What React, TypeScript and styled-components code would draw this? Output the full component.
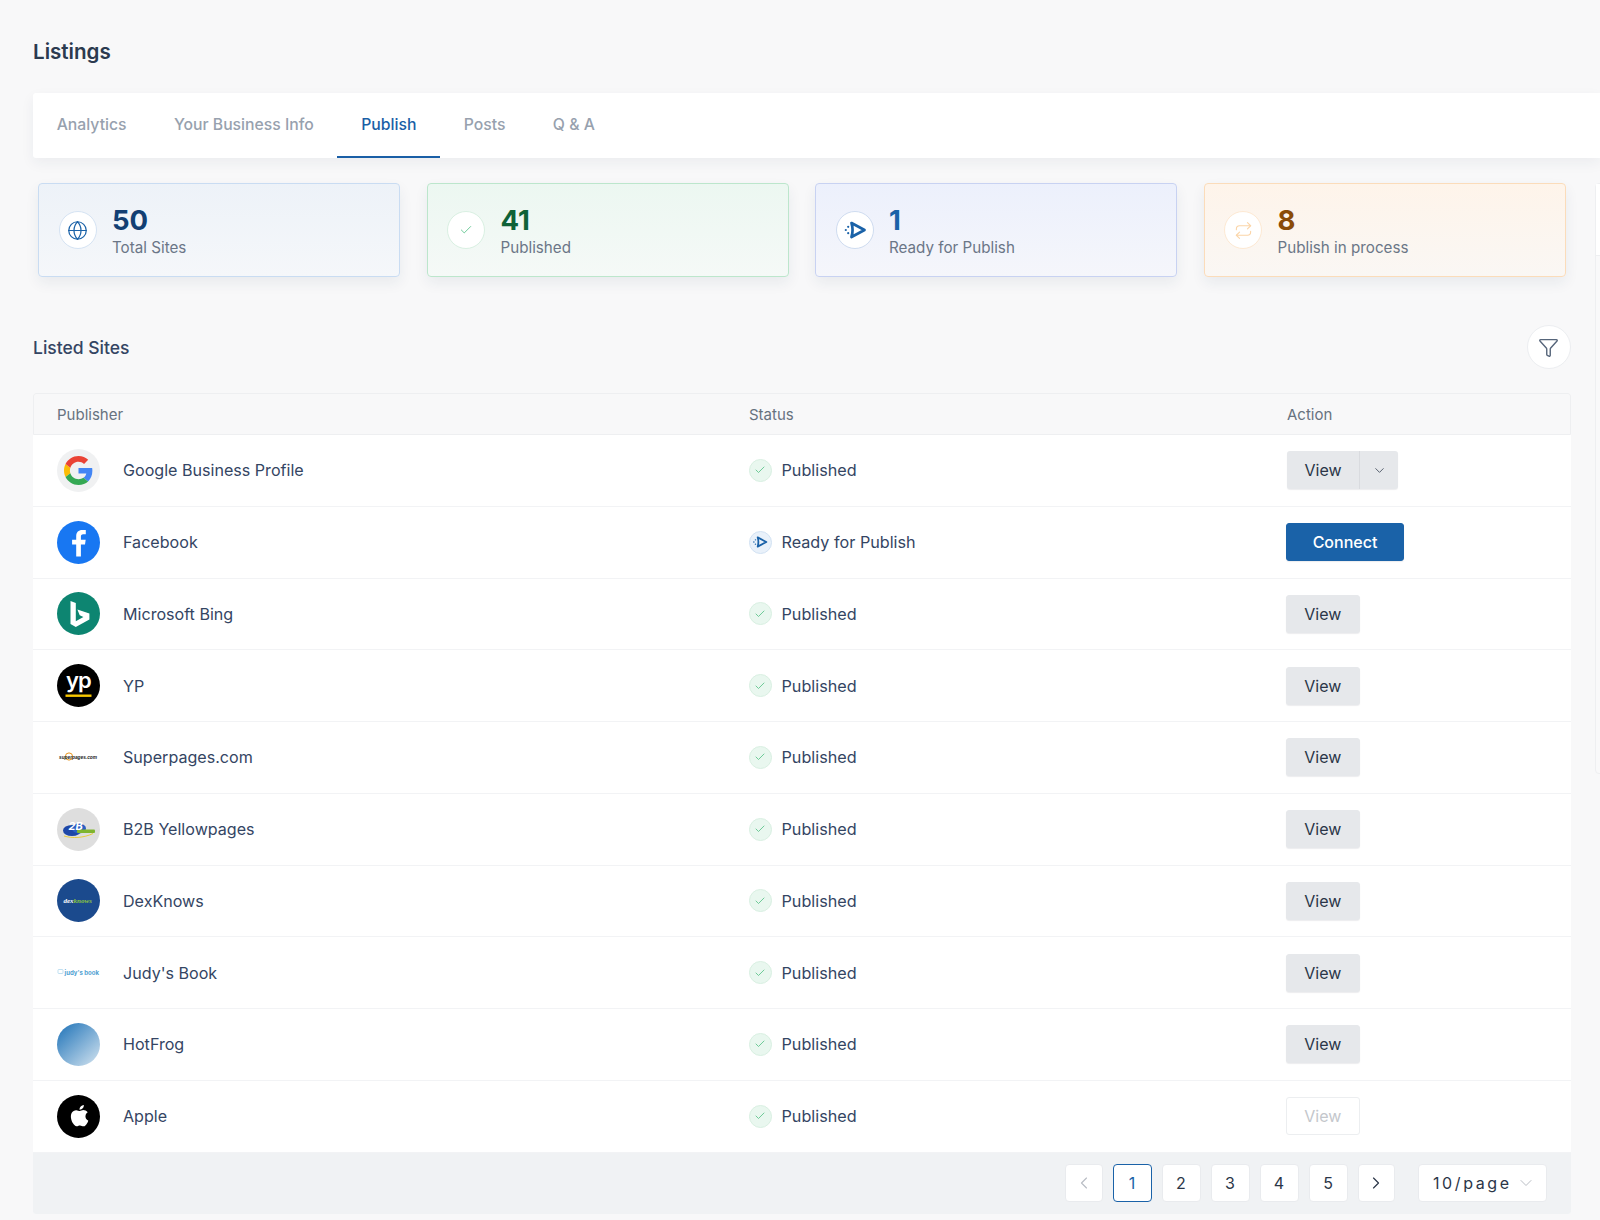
import React from "react";
import styled, { createGlobalStyle } from "styled-components";
import { ChevronDown, ChevronLeft, ChevronRight, Check, Filter, Globe, Repeat } from "lucide-react";

const GlobalStyle = createGlobalStyle`
  html, body {
    margin: 0;
    padding: 0;
    background: #f8f8f9;
  }
  body {
    font-family: Inter, "Liberation Sans", sans-serif;
    color: #344563;
  }
  * {
    box-sizing: border-box;
  }
`;

const Page = styled.div`
  position: relative;
  width: 1600px;
  height: 1220px;
  padding: 38px 0 0 33px;
  overflow: hidden;
`;

const Title = styled.h1`
  margin: 0 0 28px;
  font-size: 20.6px;
  line-height: 27px;
  font-weight: 600;
  color: #2b3a4f;
`;

const TabBar = styled.div`
  display: flex;
  height: 65px;
  background: #fff;
  border-radius: 3px 0 0 3px;
  box-shadow: 0 5px 14px rgba(30, 50, 80, 0.06);
`;

const Tab = styled.div<{ active?: boolean }>`
  display: flex;
  align-items: center;
  padding: 0 23.7px;
  font-size: 15.75px;
  font-weight: 500;
  color: ${(props) => (props.active ? "#1a5fa6" : "#97a1ae")};
  border-bottom: 2px solid ${(props) => (props.active ? "#1a5fa6" : "transparent")};
`;

const SidePanel = styled.div`
  position: absolute;
  top: 183px;
  left: 1595px;
  width: 20px;
  height: 591px;
  border: 1px solid #eeeff1;
  border-radius: 4px;
  background: #f9f9fa;
`;

const SidePanelHead = styled.div`
  height: 72px;
  background: #fff;
  border-bottom: 1px solid #eeeff1;
`;

const StatRow = styled.div`
  display: flex;
  gap: 26.5px;
  margin: 25px 0 0 5px;
`;

const StatCard = styled.div<{ border: string; from: string; to: string }>`
  display: flex;
  align-items: center;
  gap: 15.5px;
  width: 362px;
  height: 94px;
  padding: 0 19.5px;
  border: 1px solid ${(props) => props.border};
  border-radius: 4px;
  background: linear-gradient(180deg, ${(props) => props.from}, ${(props) => props.to});
  box-shadow: 0 6px 14px rgba(30, 50, 80, 0.07);
`;

const StatIcon = styled.div<{ border: string; color: string }>`
  display: flex;
  align-items: center;
  justify-content: center;
  flex: none;
  width: 38px;
  height: 38px;
  border-radius: 50%;
  background: #fff;
  border: 1px solid ${(props) => props.border};
  color: ${(props) => props.color};
`;

const StatText = styled.div`
  display: flex;
  flex-direction: column;
  padding-top: 4px;
`;

const StatValue = styled.div<{ color: string }>`
  font-size: 27.5px;
  line-height: 30px;
  font-weight: 700;
  color: ${(props) => props.color};
`;

const StatLabel = styled.div`
  font-size: 15.2px;
  line-height: 25px;
  color: #6b7687;
`;

const SectionHead = styled.div`
  display: flex;
  align-items: center;
  justify-content: space-between;
  width: 1538px;
  height: 44px;
  margin-top: 48px;
`;

const SectionTitle = styled.h2`
  margin: 0;
  font-size: 17.5px;
  font-weight: 500;
  color: #344563;
`;

const FilterButton = styled.div`
  display: flex;
  align-items: center;
  justify-content: center;
  width: 44px;
  height: 44px;
  padding-right: 1px;
  border-radius: 50%;
  background: #fff;
  border: 1px solid #eceef1;
  color: #56657a;
`;

const Table = styled.div`
  width: 1538px;
  margin-top: 24px;
  border-radius: 3px;
  background: #fff;
`;

const Grid = styled.div`
  display: grid;
  grid-template-columns: 692px 538px 1fr;
  align-items: center;
`;

const HeadRow = styled(Grid)`
  height: 42px;
  background: #f8f8f9;
  border: 1px solid #eeeff1;
  border-radius: 3px 3px 0 0;
`;

const HeadCell = styled.div`
  padding-left: 23px;
  font-size: 15px;
  color: #67727f;
`;

const Row = styled(Grid)`
  height: 71.75px;
  border-bottom: 1px solid #f2f3f5;
  &:last-of-type {
    border-bottom: 0;
  }
`;

const Publisher = styled.div`
  display: flex;
  align-items: center;
  gap: 23px;
  padding-left: 24px;
  font-size: 16.1px;
  color: #344563;
`;

const Logo = styled.div`
  display: flex;
  flex: none;
  width: 43px;
  height: 43px;
`;

const Status = styled.div`
  display: flex;
  align-items: center;
  gap: 10px;
  padding-left: 23.5px;
  font-size: 16.2px;
  color: #344563;
`;

const StatusIcon = styled.div<{ bg: string; border: string; color: string }>`
  display: flex;
  align-items: center;
  justify-content: center;
  width: 23px;
  height: 23px;
  border-radius: 50%;
  background: ${(props) => props.bg};
  border: 1px solid ${(props) => props.border};
  color: ${(props) => props.color};
`;

const ActionCell = styled.div`
  display: flex;
  padding-left: 23px;
`;

const Button = styled.div<{ variant?: "primary" | "disabled" }>`
  display: flex;
  align-items: center;
  justify-content: center;
  height: 38px;
  width: ${(props) => (props.variant === "primary" ? "118px" : "73.5px")};
  border-radius: 3px;
  font-size: 16px;
  font-weight: ${(props) => (props.variant === "primary" ? 500 : 400)};
  color: ${(props) =>
    props.variant === "primary" ? "#fff" : props.variant === "disabled" ? "#c4c7cc" : "#2b3648"};
  background: ${(props) =>
    props.variant === "primary" ? "#1a62a8" : props.variant === "disabled" ? "#fff" : "#e6e8eb"};
  border: 1px solid
    ${(props) =>
      props.variant === "primary" ? "#1a62a8" : props.variant === "disabled" ? "#eceef0" : "#e6e8eb"};
  box-shadow: ${(props) => (props.variant === "disabled" ? "none" : "0 1px 1px rgba(20, 30, 50, 0.08)")};
`;

const SplitButton = styled.div`
  display: flex;
  height: 38px;
  margin-left: 1px;
  border-radius: 3px;
  background: #e6e8eb;
  color: #2b3648;
  font-size: 16px;
  box-shadow: 0 1px 1px rgba(20, 30, 50, 0.08);
`;

const SplitLabel = styled.div`
  display: flex;
  align-items: center;
  justify-content: center;
  width: 73px;
  border-right: 1px solid #d9dbdf;
`;

const SplitCaret = styled.div`
  display: flex;
  align-items: center;
  justify-content: center;
  width: 38px;
  color: #444e5e;
`;

const Footer = styled.div`
  display: flex;
  align-items: center;
  justify-content: flex-end;
  gap: 10px;
  height: 61px;
  padding-right: 24px;
  background: #f0f2f4;
  border-radius: 0 0 3px 3px;
`;

const PageButton = styled.div<{ active?: boolean; muted?: boolean; narrow?: boolean }>`
  display: flex;
  align-items: center;
  justify-content: center;
  width: ${(props) => (props.narrow ? "37.5px" : "39px")};
  height: 38px;
  border-radius: 4px;
  background: #fff;
  border: 1px solid ${(props) => (props.active ? "#1a62a8" : "#e9ebee")};
  font-size: 16px;
  color: ${(props) => (props.active ? "#1a62a8" : props.muted ? "#b9bdc4" : "#2b3648")};
`;

const PageSize = styled.div`
  display: flex;
  align-items: center;
  justify-content: space-between;
  width: 129px;
  height: 38px;
  margin-left: 13px;
  padding: 0 10px 0 14px;
  border-radius: 4px;
  background: #fff;
  border: 1px solid #e9ebee;
  font-size: 16px;
  letter-spacing: 2.6px;
  color: #2b3648;
`;

const ReadyGlyph = ({ size }: { size: number }) => (
  <svg width={size} height={size} viewBox="0 0 24 24" fill="none" stroke="currentColor" strokeWidth="2.7" strokeLinejoin="round">
    <path d="M8.5 5l13 7-13 7c1.4-4.6 1.4-9.4 0-14z" />
    <g fill="currentColor" stroke="none">
      <circle cx="5.2" cy="8.8" r="1.1" />
      <circle cx="2.8" cy="12" r="1.1" />
      <circle cx="5.2" cy="15.2" r="1.1" />
    </g>
  </svg>
);

const GoogleLogo = () => (
  <svg width="43" height="43" viewBox="0 0 43 43">
    <circle cx="21.5" cy="21.5" r="21.5" fill="#f0f1f2" />
    <g transform="translate(7 7) scale(0.604)">
      <path fill="#4285F4" d="M46.98 24.55c0-1.57-.15-3.09-.38-4.55H24v9.02h12.94c-.58 2.96-2.26 5.48-4.78 7.18l7.73 6c4.51-4.18 7.09-10.36 7.09-17.65z" />
      <path fill="#FBBC05" d="M10.53 28.59c-.48-1.45-.76-2.99-.76-4.59s.27-3.14.76-4.59l-7.98-6.19C.92 16.46 0 20.12 0 24c0 3.88.92 7.54 2.56 10.78l7.97-6.19z" />
      <path fill="#EA4335" d="M24 9.5c3.54 0 6.71 1.22 9.21 3.6l6.85-6.85C35.9 2.38 30.47 0 24 0 14.62 0 6.51 5.38 2.56 13.22l7.98 6.19C12.43 13.72 17.74 9.5 24 9.5z" />
      <path fill="#34A853" d="M24 48c6.48 0 11.93-2.13 15.89-5.81l-7.73-6c-2.15 1.45-4.92 2.3-8.16 2.3-6.26 0-11.57-4.22-13.47-9.91l-7.98 6.19C6.51 42.62 14.62 48 24 48z" />
    </g>
  </svg>
);

const FacebookLogo = () => (
  <svg width="43" height="43" viewBox="0 0 43 43">
    <circle cx="21.5" cy="21.5" r="21.5" fill="#1877f2" />
    <path fill="#fff" d="M23.9 35.5V23.4h4.1l.7-4.7h-4.8v-3c0-1.4.5-2.4 2.4-2.4h2.5V9.1c-.5-.1-2-.2-3.6-.2-3.6 0-6 2.2-6 6.2v3.6h-4.1v4.7h4.1v12.1z" />
  </svg>
);

const BingLogo = () => (
  <svg width="43" height="43" viewBox="0 0 43 43">
    <circle cx="21.5" cy="21.5" r="21.5" fill="#0d8571" />
    <path fill="#fff" d="M13.5 9l5.3 1.9v18.4l7.6-4.4-3.7-1.7-2.3-5.8 12 4.2v5.8L18.8 35l-5.3-3z" />
  </svg>
);

const YpLogo = () => (
  <svg width="43" height="43" viewBox="0 0 43 43">
    <circle cx="21.5" cy="21.5" r="21.5" fill="#000" />
    <text x="21.5" y="24" textAnchor="middle" fontFamily="Inter, sans-serif" fontSize="22" fontWeight="600" letterSpacing="-0.8" fill="#fff">
      yp
    </text>
    <rect x="8.5" y="30.5" width="26" height="2.4" fill="#f7c600" />
  </svg>
);

const SuperpagesLogo = () => (
  <svg width="43" height="43" viewBox="0 0 43 43">
    <circle cx="12" cy="20.5" r="3.6" fill="none" stroke="#e8951c" strokeWidth="1" />
    <text x="2" y="22.5" fontFamily="Liberation Sans, sans-serif" fontSize="5" fontWeight="700" fontStyle="italic" textLength="38" lengthAdjust="spacingAndGlyphs" fill="#1d1d1d">
      superpages.com
    </text>
  </svg>
);

const B2bLogo = () => (
  <svg width="43" height="43" viewBox="0 0 43 43">
    <circle cx="21.5" cy="21.5" r="21.5" fill="#dedede" />
    <ellipse cx="15" cy="22.5" rx="9" ry="5.5" fill="#1d47a8" />
    <ellipse cx="22" cy="20.5" rx="7" ry="5" fill="#2a5fc4" />
    <rect x="20" y="21.5" width="18" height="3.6" rx="1" fill="#7fb52e" />
    <text x="11.5" y="22" fontFamily="Inter, sans-serif" fontSize="11" fontStyle="italic" fontWeight="700" fill="#fff">
      2B
    </text>
    <path d="M7 28c8 2.5 20 2 29-2.5" fill="none" stroke="#e7c92c" strokeWidth="0.9" />
  </svg>
);

const DexLogo = () => (
  <svg width="43" height="43" viewBox="0 0 43 43">
    <circle cx="21.5" cy="21.5" r="21.5" fill="#1b4a8d" />
    <text x="6.5" y="23.5" fontFamily="Liberation Serif, serif" fontSize="7" fontWeight="700" fontStyle="italic" fill="#fff">
      dex
      <tspan fill="#8cc63f">knows</tspan>
    </text>
  </svg>
);

const JudysLogo = () => (
  <svg width="43" height="43" viewBox="0 0 43 43">
    <rect x="1" y="18.5" width="5" height="4" rx="0.8" fill="none" stroke="#a5d3ec" strokeWidth="0.7" />
    <text x="7.5" y="23.5" fontFamily="Inter, sans-serif" fontSize="6" fontWeight="700" textLength="34.5" lengthAdjust="spacingAndGlyphs" fill="#4f9fd2">
      judy's book
    </text>
  </svg>
);

const HotFrogLogo = () => (
  <svg width="43" height="43" viewBox="0 0 43 43">
    <defs>
      <linearGradient id="hotfrog" x1="0.1" y1="0.1" x2="0.9" y2="0.95">
        <stop offset="0" stopColor="#2f7dbd" />
        <stop offset="1" stopColor="#c7dcec" />
      </linearGradient>
    </defs>
    <circle cx="21.5" cy="21.5" r="21.5" fill="url(#hotfrog)" />
  </svg>
);

const AppleLogo = () => (
  <svg width="43" height="43" viewBox="0 0 43 43">
    <circle cx="21.5" cy="21.5" r="21.5" fill="#000" />
    <g transform="translate(8.8 8.2) scale(1.05)">
      <path fill="#fff" d="M18.7 12.5c0-2.6 2.1-3.8 2.2-3.9-1.2-1.8-3.1-2-3.7-2-1.6-.2-3.1.9-3.9.9-.8 0-2-.9-3.4-.9-1.7 0-3.3 1-4.2 2.6-1.8 3.1-.5 7.7 1.3 10.2.9 1.2 1.9 2.6 3.2 2.6 1.3-.1 1.8-.8 3.3-.8s2 .8 3.4.8 2.2-1.2 3.1-2.5c1-1.4 1.4-2.8 1.4-2.9-.1 0-2.7-1-2.7-4.1zM16.1 4.9c.7-.9 1.2-2.1 1.1-3.3-1 0-2.3.7-3 1.5-.7.8-1.3 2-1.1 3.2 1.1.1 2.3-.6 3-1.4z" />
    </g>
  </svg>
);

const stats = [
  { value: "50", label: "Total Sites", border: "#c9dcf2", from: "#edf2f8", to: "#f5f7fa", valueColor: "#123f73", iconBorder: "#d5e3f3", iconColor: "#1a62a8", icon: <Globe size={21} strokeWidth={1.4} /> },
  { value: "41", label: "Published", border: "#bce6cc", from: "#ecf7f1", to: "#f5f9f7", valueColor: "#0f6238", iconBorder: "#d9f0e2", iconColor: "#4fbf82", icon: <Check size={14} strokeWidth={1.4} /> },
  { value: "1", label: "Ready for Publish", border: "#c8d2f2", from: "#ecf0fc", to: "#f5f6fb", valueColor: "#1a62a8", iconBorder: "#cfdcf0", iconColor: "#1a62a8", icon: <ReadyGlyph size={24} /> },
  { value: "8", label: "Publish in process", border: "#fbdcba", from: "#fef4ea", to: "#faf7f4", valueColor: "#8a4b08", iconBorder: "#fde9d3", iconColor: "#fbd5a8", icon: <Repeat size={19} strokeWidth={1.4} /> },
];

const sites = [
  { name: "Google Business Profile", logo: <GoogleLogo />, split: true },
  { name: "Facebook", logo: <FacebookLogo />, ready: true },
  { name: "Microsoft Bing", logo: <BingLogo /> },
  { name: "YP", logo: <YpLogo /> },
  { name: "Superpages.com", logo: <SuperpagesLogo /> },
  { name: "B2B Yellowpages", logo: <B2bLogo /> },
  { name: "DexKnows", logo: <DexLogo /> },
  { name: "Judy's Book", logo: <JudysLogo /> },
  { name: "HotFrog", logo: <HotFrogLogo /> },
  { name: "Apple", logo: <AppleLogo />, disabled: true },
];

const App = () => {
  return (
    <Page>
      <GlobalStyle />
      <Title>Listings</Title>
      <TabBar>
        <Tab>Analytics</Tab>
        <Tab>Your Business Info</Tab>
        <Tab active>Publish</Tab>
        <Tab>Posts</Tab>
        <Tab>Q &amp; A</Tab>
      </TabBar>
      <SidePanel>
        <SidePanelHead />
      </SidePanel>
      <StatRow>
        {stats.map((stat) => (
          <StatCard key={stat.label} border={stat.border} from={stat.from} to={stat.to}>
            <StatIcon border={stat.iconBorder} color={stat.iconColor}>
              {stat.icon}
            </StatIcon>
            <StatText>
              <StatValue color={stat.valueColor}>{stat.value}</StatValue>
              <StatLabel>{stat.label}</StatLabel>
            </StatText>
          </StatCard>
        ))}
      </StatRow>
      <SectionHead>
        <SectionTitle>Listed Sites</SectionTitle>
        <FilterButton>
          <Filter size={21} strokeWidth={1.6} />
        </FilterButton>
      </SectionHead>
      <Table>
        <HeadRow>
          <HeadCell>Publisher</HeadCell>
          <HeadCell>Status</HeadCell>
          <HeadCell>Action</HeadCell>
        </HeadRow>
        {sites.map((site) => (
          <Row key={site.name}>
            <Publisher>
              <Logo>{site.logo}</Logo>
              {site.name}
            </Publisher>
            <Status>
              {site.ready ? (
                <StatusIcon bg="#e9f1fa" border="#d2e2f3" color="#1a62a8">
                  <ReadyGlyph size={16} />
                </StatusIcon>
              ) : (
                <StatusIcon bg="#e9f7ef" border="#d9f0e2" color="#4fbf82">
                  <Check size={12} strokeWidth={1.6} />
                </StatusIcon>
              )}
              {site.ready ? "Ready for Publish" : "Published"}
            </Status>
            <ActionCell>
              {site.split ? (
                <SplitButton>
                  <SplitLabel>View</SplitLabel>
                  <SplitCaret>
                    <ChevronDown size={15} strokeWidth={1.4} />
                  </SplitCaret>
                </SplitButton>
              ) : site.ready ? (
                <Button variant="primary">Connect</Button>
              ) : (
                <Button variant={site.disabled ? "disabled" : undefined}>View</Button>
              )}
            </ActionCell>
          </Row>
        ))}
        <Footer>
          <PageButton narrow muted>
            <ChevronLeft size={20} strokeWidth={1.4} />
          </PageButton>
          <PageButton active>1</PageButton>
          <PageButton>2</PageButton>
          <PageButton>3</PageButton>
          <PageButton>4</PageButton>
          <PageButton>5</PageButton>
          <PageButton narrow>
            <ChevronRight size={20} strokeWidth={1.4} />
          </PageButton>
          <PageSize>
            10/page
            <ChevronDown size={20} strokeWidth={1.2} color="#b9bdc4" />
          </PageSize>
        </Footer>
      </Table>
    </Page>
  );
};

export default App;
